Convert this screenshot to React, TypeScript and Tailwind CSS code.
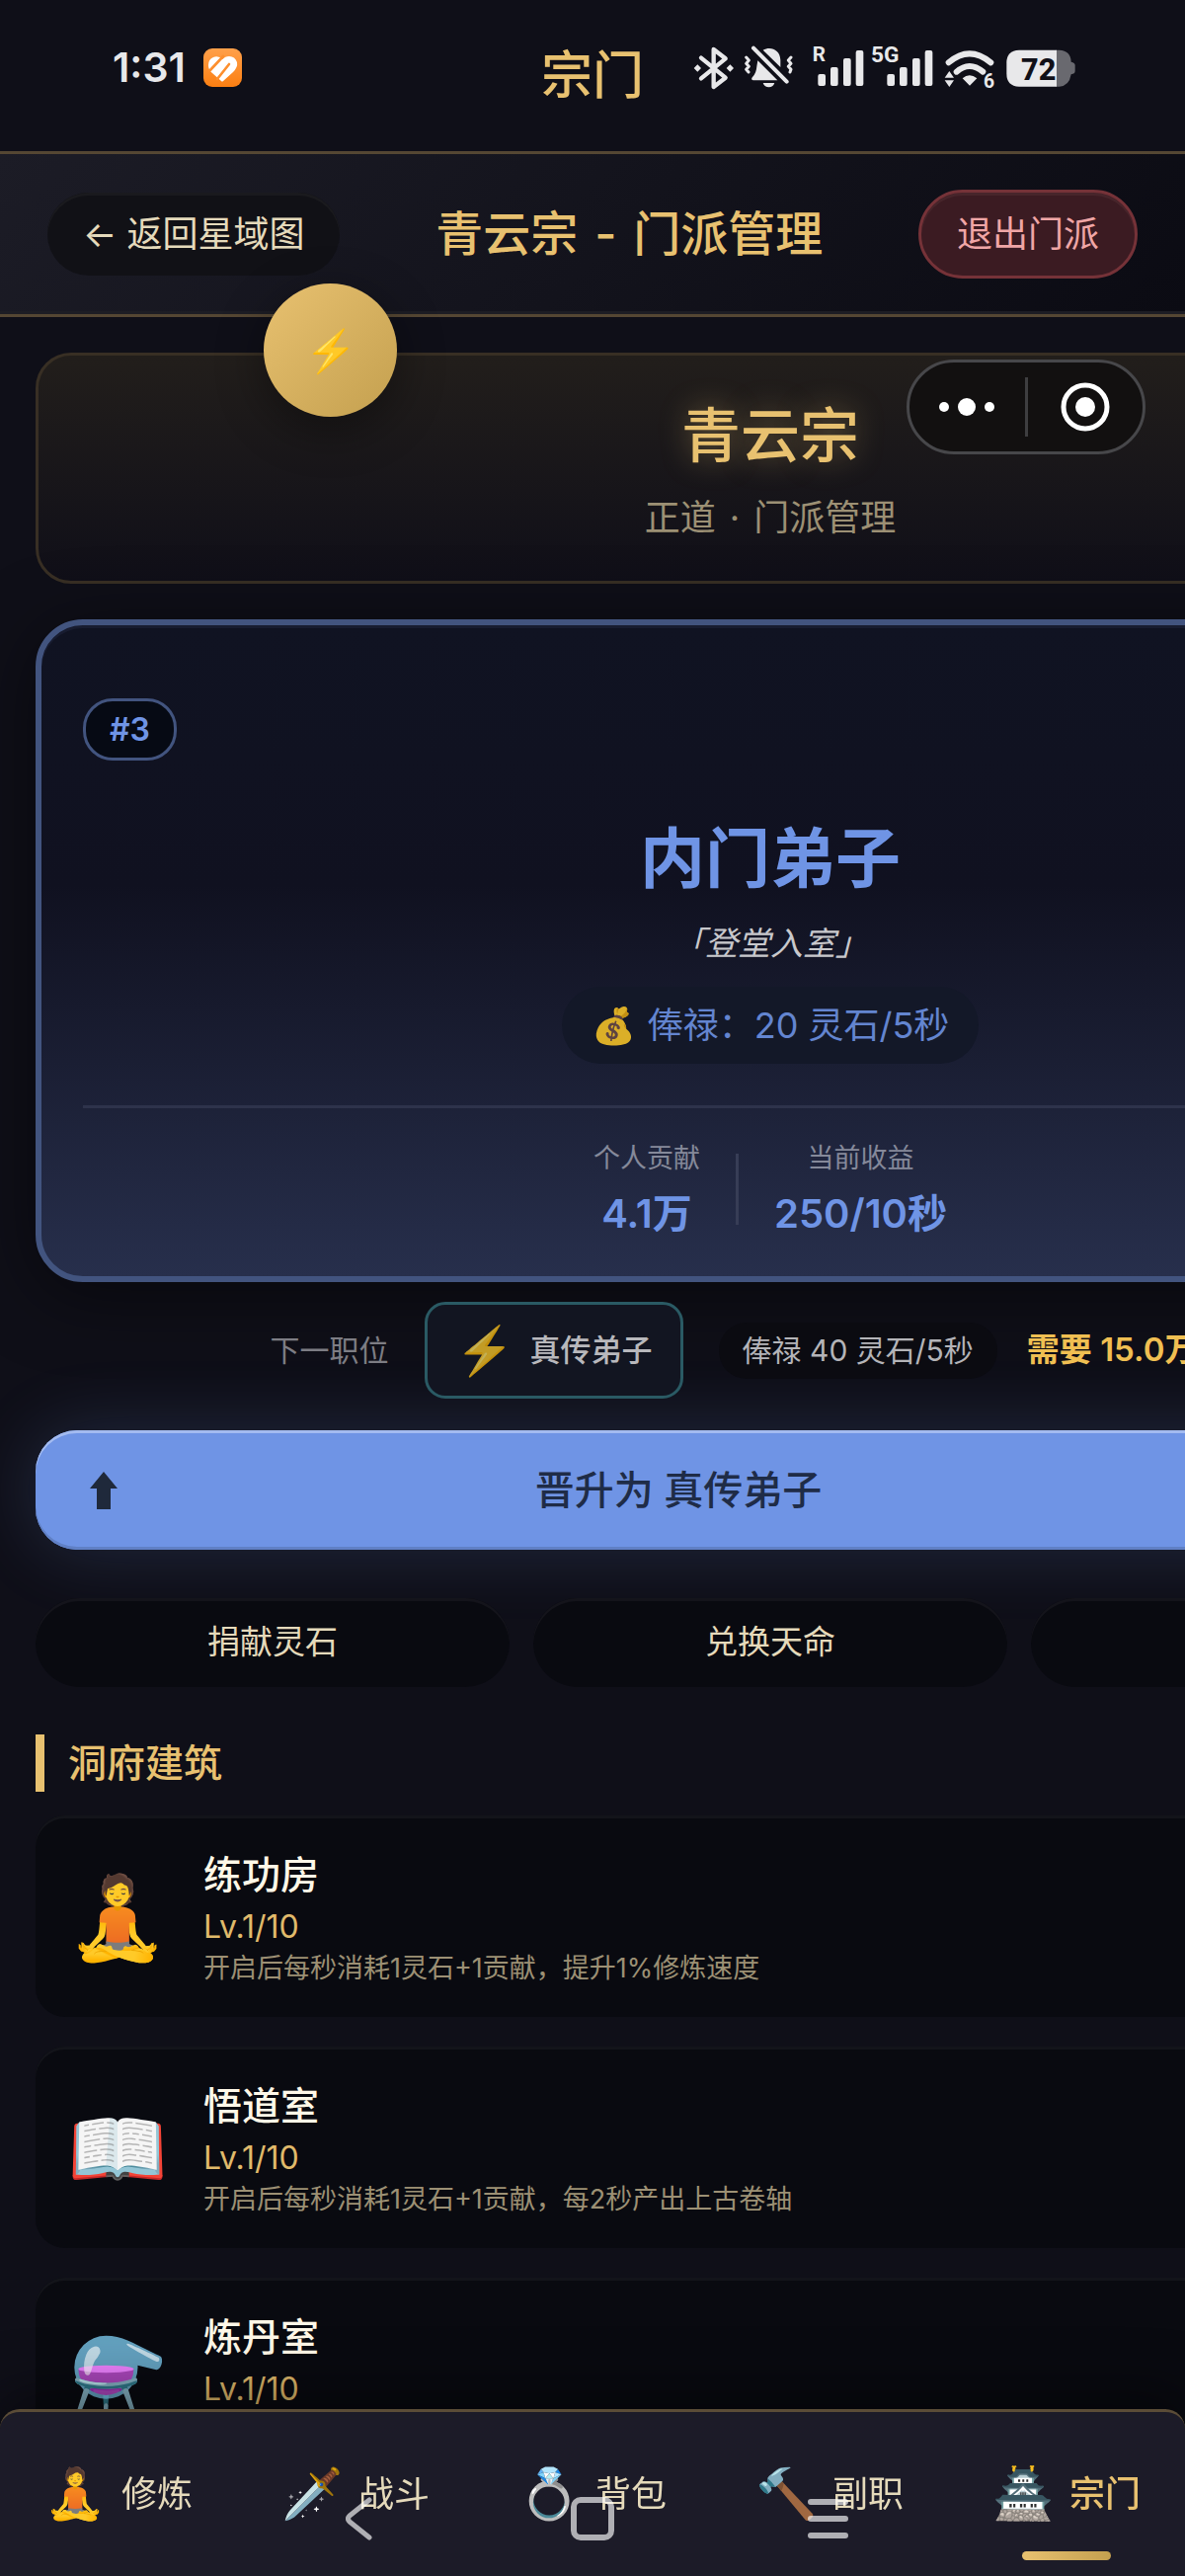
import clsx from 'clsx';

type Building = {
    icon: string;
    name: string;
    level: string;
    description: string;
}

type Tab = {
    icon: string;
    label: string;
}

const buildings: Building[] = [
    { icon: '🧘', name: '练功房', level: 'Lv.1/10', description: '开启后每秒消耗1灵石+1贡献，提升1%修炼速度' },
    { icon: '📖', name: '悟道室', level: 'Lv.1/10', description: '开启后每秒消耗1灵石+1贡献，每2秒产出上古卷轴' },
    { icon: '⚗️', name: '炼丹室', level: 'Lv.1/10', description: '' },
];

const tabs: Tab[] = [
    { icon: '🧘', label: '修炼' },
    { icon: '🗡️', label: '战斗' },
    { icon: '💍', label: '背包' },
    { icon: '🔨', label: '副职' },
    { icon: '🏯', label: '宗门' },
];

const StatusIcons = () => (
    <svg viewBox="60 0 1170 240" className="h-[80px] w-[390px]" fill="#e8e8ea">
        {/* bluetooth */}
        <path
            d="M90 86 L164 146 L128 174 V60 L164 88 L90 148"
            fill="none"
            stroke="#e8e8ea"
            strokeWidth="13"
            strokeLinecap="round"
            strokeLinejoin="round"
        />
        <path d="M79 106 l11 11 -11 11 -11 -11z M178 106 l11 11 -11 11 -11 -11z" />
        {/* muted bell */}
        <path d="M278 62 C300 50 330 60 331 92 V114z M262 94 L322 154 H248 Q240 152 246 144 Q258 132 259 112z M278 162 H313 Q308 175 296 175 Q283 175 278 162z" />
        <path d="M249 56 L350 158" stroke="#e8e8ea" strokeWidth="12" strokeLinecap="round" />
        <path
            d="M227 84 l8 9 -8 10 8 9 -8 9 7 8 M363 84 l-8 9 8 10 -8 9 8 9 -3 8"
            fill="none"
            stroke="#e8e8ea"
            strokeWidth="9"
            strokeLinecap="round"
            strokeLinejoin="round"
        />
        {/* signal bars */}
        <text x="428" y="96" fontSize="62" fontWeight="700" fontFamily="Roboto, sans-serif">R</text>
        <rect x="445" y="135" width="23" height="36" rx="6" />
        <rect x="483" y="114" width="23" height="57" rx="6" />
        <rect x="522" y="87" width="23" height="84" rx="6" />
        <rect x="560" y="63" width="23" height="108" rx="6" />
        <text x="606" y="100" fontSize="68" fontWeight="700" fontFamily="Roboto, sans-serif">5G</text>
        <rect x="655" y="135" width="23" height="36" rx="6" />
        <rect x="693" y="114" width="23" height="57" rx="6" />
        <rect x="732" y="87" width="23" height="84" rx="6" />
        <rect x="770" y="63" width="23" height="108" rx="6" />
        {/* wifi */}
        <path
            d="M842 100 Q905 46 970 100 M866 128 Q905 94 946 128"
            fill="none"
            stroke="#e8e8ea"
            strokeWidth="18"
            strokeLinecap="round"
        />
        <path d="M884 148 Q905 130 928 148 L906 170z M844 126 l14 20 h-28z M830 154 h28 l-14 20z" />
        <text x="948" y="177" fontSize="58" fontWeight="700" fontFamily="Roboto, sans-serif">6</text>
        {/* battery */}
        <path d="M1168 62 h10 Q1213 64 1214 98 q12 2 12 10 v18 q0 8 -12 10 Q1208 172 1178 173 h-10z" fill="#69696f" />
        <path d="M1056 62 H1170 V173 H1056 Q1018 171 1018 134 V100 Q1018 64 1056 62z" />
        <text x="1062" y="152" fontSize="92" fontWeight="800" fill="#101018" fontFamily="Roboto, sans-serif">72</text>
    </svg>
);

const HealthIcon = () => (
    <svg viewBox="0 0 39 39" className="size-[39px]">
        <defs>
            <linearGradient id="health" x1="0" y1="0" x2="0" y2="1">
                <stop offset="0" stopColor="#ffa04a" />
                <stop offset="1" stopColor="#fb7f12" />
            </linearGradient>
        </defs>
        <rect width="39" height="39" rx="9" fill="url(#health)" />
        <path d="M19.5 11 Q15 7 10 9 Q5 11 5 17 Q5 22 9 25 L18 33 Q19 34 20 33 L30 24 Q35 19 34 14 Q32 8 26 8 Q22 8 19.5 11z" fill="#fff" />
        <path d="M6 23 L20 8 M14 31 L26 16" stroke="#fd8f2e" strokeWidth="2.6" strokeLinecap="round" />
    </svg>
);

const StatusBar = () => (
    <div className="grid h-[153px] grid-cols-[1fr_auto_1fr]">
        <div className="flex items-center gap-[18px] pb-4 pl-[114px]">
            <span className="text-[41px] font-semibold text-[#e8e8ea]">1:31</span>
            <HealthIcon />
        </div>
        <div className="flex items-center text-[52px] font-medium text-[#e8c170]">宗门</div>
        <div className="flex items-start justify-end pt-[30px] pr-[110px]">
            <StatusIcons />
        </div>
    </div>
);

const Header = () => (
    <header className="flex h-[168px] items-center justify-between border-y-3 border-[#554733] bg-linear-135 from-[#1c1c26] to-[#0b0b13] px-12 shadow-[inset_0_-3px_0_#1d1d24]">
        <button className="h-[84px] rounded-[42px] bg-[#111116] px-9 text-4xl text-[#e5dabb] shadow-[inset_0_3px_0_#1a1a1e]">
            ← 返回星域图
        </button>
        <h1 className="text-5xl font-medium text-[#e8c170]">
            青云宗 <span className="mx-1">-</span> 门派管理
        </h1>
        <button className="h-[90px] rounded-[45px] border-3 border-[#753238] bg-[#3b1b22] px-9 text-4xl text-[#f0a6a6] shadow-[inset_0_3px_0_#47252b]">
            退出门派
        </button>
    </header>
);

const RankCard = () => (
    <section className="flex flex-col items-center rounded-[48px] border-6 border-[#42547f] bg-linear-to-b from-[#101322] via-[#101120] via-40% to-[#272f4c] px-[42px] pt-[74px] pb-9 shadow-[inset_0_3px_0_#181c30,0_12px_72px_rgba(0,0,0,0.5)]">
        <div className="flex h-[63px] items-center self-start rounded-[30px] border-3 border-[#42547f] bg-[#060a14] px-6 text-[32px] font-semibold text-[#6f94e5]">
            #3
        </div>
        <h3 className="mt-[50px] text-[66px] leading-[99px] font-bold text-[#6f94e5]">内门弟子</h3>
        <p className="mt-3 text-[33px] leading-[48px] text-[#c8c8cc] italic">「登堂入室」</p>
        <div className="mt-[20px] flex h-[78px] items-center gap-3 rounded-[39px] bg-[#131828] px-[30px] text-4xl text-[#6385d0]">
            <span className="opacity-85">💰</span>
            <span>俸禄：20 灵石/5秒</span>
        </div>
        <div className="mt-[42px] flex items-center justify-center gap-9 self-stretch border-t-3 border-[#2e334b] pt-[30px]">
            <div className="text-center">
                <div className="text-[27px] leading-[42px] text-[#85899a]">个人贡献</div>
                <div className="mt-2 text-[40px] leading-[54px] font-semibold text-[#6f94e5]">4.1万</div>
            </div>
            <div className="h-[72px] w-[3px] bg-[#373d56]" />
            <div className="text-center">
                <div className="text-[27px] leading-[42px] text-[#85899a]">当前收益</div>
                <div className="mt-2 text-[40px] leading-[54px] font-semibold text-[#6f94e5]">250/10秒</div>
            </div>
        </div>
    </section>
);

const NextRank = () => (
    <div className="mt-5 flex items-center justify-center gap-9 pr-2 whitespace-nowrap">
        <span className="text-[30px] text-[#7d7d84]">下一职位</span>
        <div className="flex h-[98px] items-center gap-4 rounded-[21px] border-3 border-[#2a5a64] bg-[#121521] px-7">
            <span className="text-[48px] opacity-75">⚡</span>
            <span className="text-[31px] font-medium text-[#b8b8bc]">真传弟子</span>
        </div>
        <div className="flex items-center gap-[30px]">
            <span className="flex h-[57px] items-center rounded-[28px] bg-[#0b0b11] px-6 text-[30px] text-[#b4b4b8]">
                俸禄 40 灵石/5秒
            </span>
            <span className="text-[33px] font-semibold text-[#f0bf52]">需要 15.0万贡献</span>
        </div>
    </div>
);

const BuildingCard = ({ icon, name, level, description }: Building) => (
    <li className="flex h-[204px] items-center gap-9 rounded-[30px] bg-[#090a10] px-8 shadow-[inset_0_3px_0_#13141a]">
        <span className="w-[102px] text-center text-[82px]">{icon}</span>
        <div>
            <h3 className="text-[39px] leading-[60px] font-medium text-[#fff8e8]">{name}</h3>
            <div className="text-[32px] leading-[45px] text-[#e0ba6b]">{level}</div>
            <p className="min-h-10 text-[27px] leading-[40px] text-[#9c9074]">{description}</p>
        </div>
    </li>
);

const TabBar = () => (
    <nav className="fixed inset-x-0 bottom-0 grid h-[169px] grid-cols-5 rounded-t-[20px] border-t-3 border-[#5b4c37] bg-[#1c1b28] shadow-[0_-12px_60px_rgba(0,0,0,0.5)]">
        {tabs.map((tab, index) => {
            const active = index === tabs.length - 1;
            return (
                <a
                    key={tab.label}
                    href="#"
                    className={clsx(
                        'relative flex items-center justify-center gap-4 text-4xl',
                        active ? 'font-medium text-[#e8c170]' : 'text-[#e5dabb]',
                    )}
                >
                    <span className="text-[50px]">{tab.icon}</span>
                    {tab.label}
                    {active && (
                        <span className="absolute bottom-4 h-[9px] w-[90px] rounded-full bg-linear-to-r from-[#e8c170] to-[#c4a04f]" />
                    )}
                </a>
            );
        })}
    </nav>
);

const SystemKeys = () => (
    <div className="pointer-events-none fixed inset-x-0 bottom-[36px] flex justify-center gap-[191px] opacity-65">
        <svg viewBox="0 0 50 44" className="h-[44px] w-[50px]" fill="none" stroke="#fff" strokeWidth="5" strokeLinecap="round" strokeLinejoin="round">
            <path d="M37 3 L17 19 Q14 22 17 25 L37 41" />
        </svg>
        <svg viewBox="0 0 44 44" className="size-[44px]" fill="none" stroke="#fff" strokeWidth="6">
            <rect x="3" y="3" width="38" height="38" rx="7" />
        </svg>
        <svg viewBox="0 0 50 44" className="h-[44px] w-[50px]" stroke="#fff" strokeWidth="6" strokeLinecap="round">
            <path d="M8 5 H43 M8 22 H43 M8 39 H43" />
        </svg>
    </div>
);

const Capsule = () => (
    <div className="fixed top-[364px] right-10 flex h-[96px] w-[242px] items-center rounded-full border-3 border-[#47474a] bg-[#121010]">
        <button aria-label="更多" className="flex flex-1 justify-center">
            <svg viewBox="0 0 56 20" className="h-[20px] w-[56px]" fill="#fff">
                <circle cx="5" cy="10" r="5" />
                <circle cx="28" cy="10" r="9" />
                <circle cx="51" cy="10" r="5" />
            </svg>
        </button>
        <div className="h-[60px] w-[3px] bg-[#3e3e40]" />
        <button aria-label="关闭" className="flex flex-1 justify-center">
            <svg viewBox="0 0 50 50" className="size-[50px]">
                <circle cx="25" cy="25" r="22" fill="none" stroke="#fff" strokeWidth="5" />
                <circle cx="25" cy="25" r="10" fill="#fff" />
            </svg>
        </button>
    </div>
);

export default function App() {
    return (
        <div className="h-screen overflow-hidden bg-[#0f0f18] font-['Inter','Noto_Sans_CJK_SC',sans-serif]">
            <StatusBar />
            <Header />
            {/* the page body is wider than the phone and runs off its right edge */}
            <main className="w-[130%] px-9 pt-9">
                <section className="rounded-[36px] border-3 border-[#382f24] bg-linear-to-b from-[#221e1b] to-[#100f18] pt-9 pb-[34px] text-center">
                    <h2 className="text-[60px] leading-[90px] font-medium text-[#e8c170] [text-shadow:0_0_30px_rgba(232,193,112,0.4)]">
                        青云宗
                    </h2>
                    <p className="mt-2 text-4xl leading-[60px] text-[#9c9074]">
                        正道 <span className="mx-1">·</span> 门派管理
                    </p>
                </section>
                <div className="mt-9">
                    <RankCard />
                </div>
                <NextRank />
                <button className="mt-8 flex h-[121px] w-full items-center rounded-[42px] bg-[#6f94e5] px-12 text-[40px] font-medium text-[#1f2c47] shadow-[inset_0_3px_0_#a3bbf0,inset_0_-3px_0_#6080c5,0_0_72px_rgba(111,148,229,0.2)]">
                    <svg viewBox="0 0 42 40" className="h-[40px] w-[42px]" fill="#1f293b">
                        <path d="M21 1 L35 18 H28 V39 H14 V18 H7z" />
                    </svg>
                    <span className="flex-1 pr-[228px] text-center">晋升为 真传弟子</span>
                </button>
                <div className="mt-[49px] grid grid-cols-3 gap-6">
                    {['捐献灵石', '兑换天命', ''].map((label) => (
                        <button
                            key={label}
                            aria-label={label || '更多'}
                            className="h-[90px] rounded-[45px] bg-[#090a10] text-[33px] text-[#e5dabb] shadow-[inset_0_3px_0_#14141b]"
                        >
                            {label}
                        </button>
                    ))}
                </div>
                <h2 className="mt-12 border-l-9 border-[#e8c170] pl-6 text-[39px] leading-[58px] font-medium text-[#e8c170]">
                    洞府建筑
                </h2>
                <ul className="mt-6 flex flex-col gap-[30px]">
                    {buildings.map((building) => (
                        <BuildingCard key={building.name} {...building} />
                    ))}
                </ul>
            </main>
            <button
                aria-label="快捷操作"
                className="fixed top-[287px] left-[267px] flex size-[135px] items-center justify-center rounded-full bg-linear-135 from-[#e8c170] to-[#c4a04f] text-[42px] shadow-[0_12px_48px_rgba(0,0,0,0.4)]"
            >
                ⚡
            </button>
            <Capsule />
            <TabBar />
            <SystemKeys />
        </div>
    );
}
